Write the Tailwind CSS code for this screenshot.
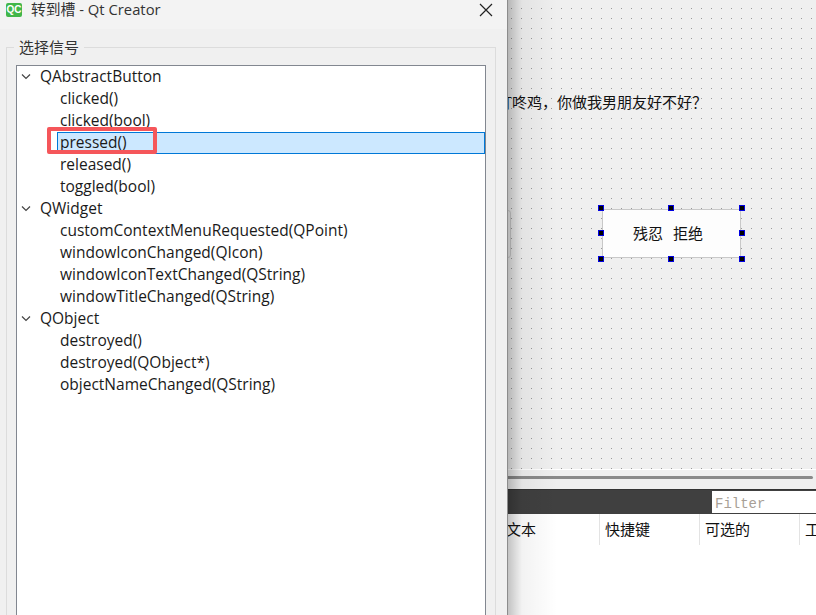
<!DOCTYPE html>
<html lang="zh">
<head>
  <meta charset="UTF-8" />
  <title>转到槽 - Qt Creator</title>
  <script src="https://cdn.jsdelivr.net/npm/@tailwindcss/browser@4"></script>
</head>
<body class="w-[816px] h-[615px] overflow-hidden bg-white font-['Open_Sans','Noto_Sans_CJK_SC',sans-serif]">
  <div class="relative flex w-[816px] h-[615px] overflow-hidden">

    <!-- slot dialog -->
    <div class="relative z-20 flex flex-col w-[508px] h-full shrink-0 bg-[#f0f0f0] border-r border-[#8c8c8c]">
      <div class="flex items-center h-[29px] shrink-0 bg-[#f3f3f3] pl-[6px] pr-[14px] pb-[10px]">
        <div class="flex items-center justify-center w-[16px] h-[14px] rounded-[2px] bg-[#41b649] text-white text-[10px] font-bold leading-none font-['Liberation_Sans']">QC</div>
        <span class="ml-[9px] text-[14.8px] leading-none text-[#333]">转到槽 - Qt Creator</span>
        <svg class="ml-auto" width="14" height="14" viewBox="0 0 14 14" fill="none" stroke="#222" stroke-width="1.2"><path d="M1 1l12 12M13 1L1 13"/></svg>
      </div>

      <div class="relative flex-1 mt-[18px] ml-[6px] mr-[11px] border border-[#dcdcdc] border-b-0 pt-[17px] pl-[9px] pr-[9px]">
        <span class="absolute left-[7px] top-[-11px] bg-[#f0f0f0] px-[5px] text-[15px] leading-[20px] text-[#333]">选择信号</span>

        <div class="h-[560px] bg-white border border-[#828790] text-[15.5px] leading-[20px] text-[#1a1a1a]">
          <div class="flex items-center h-[22px] pl-[4px] gap-[9px]">
            <svg width="10" height="6" viewBox="0 0 10 6" fill="none" stroke="#444" stroke-width="1.2"><path d="M1 0.5l4 4 4-4"/></svg>
            <span class="mb-[2px]">QAbstractButton</span>
          </div>
          <div class="h-[22px] pl-[43px]">clicked()</div>
          <div class="h-[22px] pl-[43px]">clicked(bool)</div>
          <div class="h-[22px] ml-[40px] pl-[2px] bg-[#cce8ff] border border-[#0078d7] leading-[18px]">pressed()</div>
          <div class="h-[22px] pl-[43px]">released()</div>
          <div class="h-[22px] pl-[43px]">toggled(bool)</div>
          <div class="flex items-center h-[22px] pl-[4px] gap-[9px]">
            <svg width="10" height="6" viewBox="0 0 10 6" fill="none" stroke="#444" stroke-width="1.2"><path d="M1 0.5l4 4 4-4"/></svg>
            <span class="mb-[2px]">QWidget</span>
          </div>
          <div class="h-[22px] pl-[43px]">customContextMenuRequested(QPoint)</div>
          <div class="h-[22px] pl-[43px]">windowIconChanged(QIcon)</div>
          <div class="h-[22px] pl-[43px]">windowIconTextChanged(QString)</div>
          <div class="h-[22px] pl-[43px]">windowTitleChanged(QString)</div>
          <div class="flex items-center h-[22px] pl-[4px] gap-[9px]">
            <svg width="10" height="6" viewBox="0 0 10 6" fill="none" stroke="#444" stroke-width="1.2"><path d="M1 0.5l4 4 4-4"/></svg>
            <span class="mb-[2px]">QObject</span>
          </div>
          <div class="h-[22px] pl-[43px]">destroyed()</div>
          <div class="h-[22px] pl-[43px]">destroyed(QObject*)</div>
          <div class="h-[22px] pl-[43px]">objectNameChanged(QString)</div>
        </div>
      </div>

      <!-- red annotation around the selected row -->
      <div class="absolute left-[47px] top-[127px] w-[110px] h-[27px] border-[4px] border-[#f5565a] rounded-[2px]"></div>
    </div>

    <!-- designer behind the dialog -->
    <div class="absolute left-0 top-0 w-[816px] h-[615px] flex flex-col">
      <div class="relative h-[469px] shrink-0 bg-[#efefef]">
        <svg class="absolute inset-0" width="816" height="469">
          <defs>
            <pattern id="grid" x="1" y="8" width="10" height="10" patternUnits="userSpaceOnUse">
              <rect width="1" height="1" fill="#9a9a9a"/>
            </pattern>
          </defs>
          <rect width="816" height="469" fill="url(#grid)"/>
        </svg>
        <p class="absolute left-[497px] top-[92px] text-[15px] leading-[20px] whitespace-nowrap text-[#111]">叮咚鸡，你做我男朋友好不好？</p>
        <div class="absolute left-[400px] top-[210px] w-[111px] h-[48px] rounded-[3px] border border-[#cfcfcf]"></div>
        <div class="absolute left-[602px] top-[209px] w-[139px] h-[49px] flex items-center justify-center gap-[10px] pr-[7px] bg-[#fdfdfd] border border-[#c8c8c8] text-[15px] text-[#111]"><span>残忍</span><span>拒绝</span></div>
        <div class="absolute left-[598px] top-[205px] w-[6px] h-[6px] bg-black border border-[#0000e0]"></div>
        <div class="absolute left-[668px] top-[205px] w-[6px] h-[6px] bg-black border border-[#0000e0]"></div>
        <div class="absolute left-[739px] top-[205px] w-[6px] h-[6px] bg-black border border-[#0000e0]"></div>
        <div class="absolute left-[598px] top-[230px] w-[6px] h-[6px] bg-black border border-[#0000e0]"></div>
        <div class="absolute left-[739px] top-[230px] w-[6px] h-[6px] bg-black border border-[#0000e0]"></div>
        <div class="absolute left-[598px] top-[256px] w-[6px] h-[6px] bg-black border border-[#0000e0]"></div>
        <div class="absolute left-[668px] top-[256px] w-[6px] h-[6px] bg-black border border-[#0000e0]"></div>
        <div class="absolute left-[739px] top-[256px] w-[6px] h-[6px] bg-black border border-[#0000e0]"></div>
      </div>
      <div class="h-[20px] shrink-0 bg-[#efefef] border-t border-white pt-[6px]">
        <div class="ml-[507px] w-[306px] h-[3px] bg-[#8a8a8a] rounded-r-sm"></div>
      </div>
      <div class="flex justify-end h-[25px] shrink-0 bg-[#404040] border-t border-[#333] pt-[1px] pb-[1px]">
        <div class="w-[104px] bg-white pl-[3px] pt-[2px] font-['Liberation_Mono'] text-[14px] leading-[22px] text-[#a89f96]">Filter</div>
      </div>
      <div class="flex h-[31px] shrink-0 bg-white text-[15px] leading-[31px] text-[#111]">
        <div class="w-[600px] pl-[506px] border-r border-[#e3e3e3]">文本</div>
        <div class="w-[100px] pl-[5px] border-r border-[#e3e3e3]">快捷键</div>
        <div class="w-[100px] pl-[5px] border-r border-[#e3e3e3]">可选的</div>
        <div class="flex-1 pl-[5px] whitespace-nowrap overflow-hidden">工</div>
      </div>
      <div class="flex-1 bg-white"></div>
    </div>

    <!-- drop shadow of the dialog -->
    <div class="absolute z-10 left-[507px] top-0 w-[50px] h-full bg-linear-to-r from-black/25 via-black/5 via-30% to-transparent"></div>
  </div>
</body>
</html>
